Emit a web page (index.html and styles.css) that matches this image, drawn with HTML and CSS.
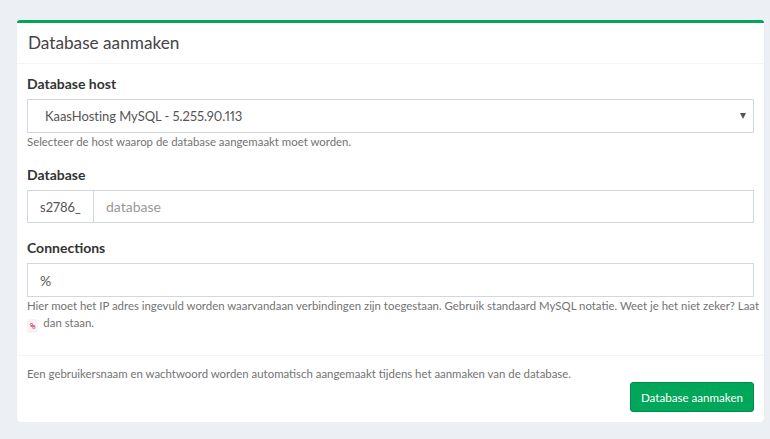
FILE: index.html
```html
<!DOCTYPE html>
<html lang="nl">
<head>
<meta charset="utf-8">
<title>Database aanmaken</title>
<link rel="stylesheet" href="styles.css">
</head>
<body>
<div class="box">
  <div class="box-header">
    <h3 class="box-title">Database aanmaken</h3>
  </div>
  <div class="box-body">
    <div class="form-group">
      <label class="control-label">Database host</label>
      <div class="select">
        <span class="select-value">KaasHosting MySQL - 5.255.90.113</span>
        <span class="caret"></span>
      </div>
      <p class="help-block">Selecteer de host waarop de database aangemaakt moet worden.</p>
    </div>
    <div class="form-group">
      <label class="control-label">Database</label>
      <div class="input-group">
        <span class="addon">s2786_</span>
        <span class="input placeholder">database</span>
      </div>
    </div>
    <div class="form-group">
      <label class="control-label">Connections</label>
      <div class="input">%</div>
      <p class="help-block"><span class="line">Hier moet het IP adres ingevuld worden waarvandaan verbindingen zijn toegestaan. Gebruik standaard MySQL notatie. Weet je het niet zeker? Laat</span><br><code>%</code> dan staan.</p>
    </div>
  </div>
  <div class="box-footer">
    <p class="footer-note">Een gebruikersnaam en wachtwoord worden automatisch aangemaakt tijdens het aanmaken van de database.</p>
    <div class="actions">
      <button class="btn">Database aanmaken</button>
    </div>
  </div>
</div>
</body>
</html>
```

FILE: styles.css
```css
* { box-sizing: border-box; }
html, body { margin: 0; padding: 0; }
body {
  background: #ecf0f5;
  font-family: "Lato", "Open Sans", sans-serif;
  font-variant-numeric: proportional-nums;
  color: #333;
  padding: 20px 6px 0 17px;
}
.box {
  width: 747px;
  background: #fff;
  border-top: 3px solid #00a65a;
  border-radius: 3px;
  box-shadow: 0 1px 1px rgba(0,0,0,0.1);
}
.box-header {
  height: 41px;
  padding: 10px 11px;
  border-bottom: 1px solid #f4f4f4;
}
.box-title {
  margin: 0;
  font-size: 17.2px;
  line-height: 20px;
  font-weight: 400;
  color: #444;
}
.box-body {
  padding: 10px;
}
.form-group { margin-bottom: 15px; }
.form-group:last-child { margin-bottom: 12px; }
.control-label {
  display: block;
  font-size: 14px;
  line-height: 20px;
  font-weight: 700;
  margin-bottom: 5px;
  color: #333;
}
.select, .input, .input-group {
  height: 34px;
  border: 1px solid #d2d6de;
  font-size: 14px;
  color: #555;
}
.select {
  display: flex;
  align-items: center;
  justify-content: space-between;
  padding: 0 7px 0 17px;
}
.select-value {
  font-size: 13px;
  letter-spacing: -0.05px;
}
.caret {
  width: 0; height: 0;
  border-left: 3.5px solid transparent;
  border-right: 3.5px solid transparent;
  border-top: 6px solid #555;
}
.input {
  display: flex;
  align-items: center;
  padding: 0 12px;
}
.input-group {
  display: flex;
  height: 33px;
}
.addon {
  display: flex;
  align-items: center;
  width: 66px;
  padding: 0 12px;
  font-size: 13px;
  border-right: 1px solid #d2d6de;
  color: #555;
}
.input-group .input {
  border: none;
  height: 31px;
  flex: 1;
}
.placeholder { color: #999; }
.help-block {
  margin: 0;
  font-size: 11.4px;
  line-height: 17px;
  color: #737373;
}
.help-block .line { white-space: nowrap; }
code {
  display: inline-block;
  height: 14px;
  line-height: 14px;
  vertical-align: -2px;
  font-family: "DejaVu Sans Mono", monospace;
  font-size: 9px;
  color: #c7254e;
  background: #f9f2f4;
  padding: 0 3px;
  border-radius: 3px;
  margin-right: 2px;
}
.box-footer {
  border-top: 1px solid #f4f4f4;
  padding: 10px;
}
.footer-note {
  margin: 0;
  font-size: 11.4px;
  line-height: 16px;
  color: #737373;
}
.actions {
  display: flex;
  justify-content: flex-end;
}
.btn {
  height: 30px;
  padding: 0 10px;
  font-family: inherit;
  font-size: 11.6px;
  color: #fff;
  background: #00a65a;
  border: 1px solid #008d4c;
  border-radius: 3px;
}
```
